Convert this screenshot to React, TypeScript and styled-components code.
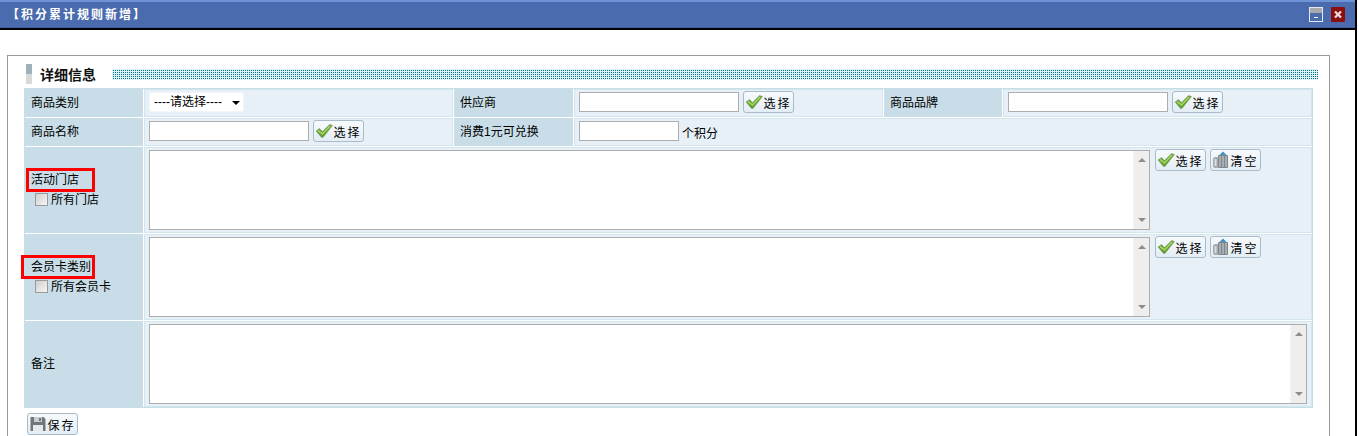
import React from "react";
import styled, { createGlobalStyle } from "styled-components";

const GlobalStyle = createGlobalStyle`
  html, body {
    margin: 0;
    padding: 0;
    height: 436px;
    overflow: hidden;
    background: #fff;
  }
  body {
    font-family: "Liberation Sans", "Noto Sans CJK SC", sans-serif;
    font-size: 12px;
    color: #000;
  }
`;

const Page = styled.div`
  width: 1355px;
  height: 436px;
  border-right: 2px solid #000;
  overflow: hidden;
`;

const TitleBar = styled.div`
  height: 28px;
  box-sizing: border-box;
  display: flex;
  align-items: center;
  justify-content: space-between;
  padding: 0 10px 0 7px;
  background: #4a6bad;
  border-top: 2px solid #6f93d6;
  border-bottom: 1px solid #43619c;
`;

const TitleRule = styled.div`
  height: 2px;
  background: #000;
`;

const TitleText = styled.div`
  color: #fff;
  font-weight: 700;
  font-size: 12px;
  letter-spacing: 2px;
  padding-bottom: 2px;
`;

const WindowTools = styled.div`
  display: flex;
  align-items: center;
  gap: 8px;
`;

const ToolIcon = styled.svg`
  display: block;
  width: 14px;
  height: 15px;
`;

const Panel = styled.div`
  margin: 25px 0 0 7px;
  width: 1323px;
  height: 400px;
  box-sizing: border-box;
  border: 1px solid #999;
  border-bottom: 0;
  padding: 8px 11px 0 16px;
`;

const SectionHead = styled.div`
  display: flex;
  align-items: center;
  height: 20px;
  padding-left: 2px;
  margin-bottom: 4px;
`;

const SectionMark = styled.div`
  width: 6px;
  height: 20px;
  background: linear-gradient(#9fb2ba 50%, #d9d9d9 50%);
`;

const SectionTitle = styled.div`
  margin-left: 8px;
  width: 72px;
  font-size: 14px;
  font-weight: 700;
  color: #111;
`;

const DotStrip = styled.div`
  flex: 1;
  height: 11px;
  background-color: #006f8f;
  background-image: linear-gradient(90deg, #dff3f6 1px, transparent 1px),
    linear-gradient(#dff3f6 1px, transparent 1px);
  background-size: 2px 2px;
`;

const FormGrid = styled.div`
  display: grid;
  grid-template-columns: 118px 309px 119px 309px 118px 309px;
  grid-template-rows: 28px 28px 86px 86px 86px;
  gap: 1px;
  width: 1287px;
  background: #fff;
  border: 1px solid #c6dee7;
`;

const LabelCell = styled.div`
  background: #c8dde7;
  padding: 0 0 3px 6px;
  display: flex;
  flex-direction: column;
  justify-content: center;
  align-items: flex-start;
`;

const ValueCell = styled.div<{ $span?: number }>`
  grid-column: span ${(p) => p.$span ?? 1};
  background: #e7f0f7;
  padding: 0 5px 2px;
  display: flex;
  align-items: center;
  gap: 4px;
  box-shadow: inset 0 0 0 1px #d3e6ee;
`;

const AreaCell = styled(ValueCell)`
  align-items: flex-start;
  padding-top: 2px;
  gap: 5px;
`;

const Marked = styled.span<{ $wide?: boolean }>`
  position: relative;
  line-height: 18px;
  &::after {
    content: "";
    position: absolute;
    box-sizing: border-box;
    top: -3px;
    bottom: -3px;
    left: ${(p) => (p.$wide ? "-10px" : "-5px")};
    right: ${(p) => (p.$wide ? "-4px" : "-16px")};
    border: 3px solid #f00;
  }
`;

const CheckRow = styled.label`
  display: flex;
  align-items: center;
  gap: 3px;
  margin: 3px 0 -2px 4px;
  line-height: 16px;
`;

const Check = styled.input`
  appearance: none;
  margin: -2px 0 0;
  width: 13px;
  height: 13px;
  box-sizing: border-box;
  border: 1px solid #9a9a9a;
  background: linear-gradient(135deg, #cfcfcf, #f6f6f6);
`;

const TextInput = styled.input<{ $short?: boolean }>`
  width: ${(p) => (p.$short ? "100px" : "160px")};
  height: 20px;
  box-sizing: border-box;
  margin: 0;
  padding: 0 2px;
  border: 1px solid #adadad;
  background: #fff;
`;

const SelectWrap = styled.div`
  position: relative;
  width: 95px;
  height: 20px;
  &::after {
    content: "";
    position: absolute;
    top: 9px;
    right: 4px;
    border-left: 4px solid transparent;
    border-right: 4px solid transparent;
    border-top: 4px solid #000;
    pointer-events: none;
  }
`;

const Select = styled.select`
  appearance: none;
  display: block;
  width: 100%;
  height: 100%;
  margin: 0;
  padding: 0 0 0 4px;
  border: 1px solid #f2f6f9;
  border-radius: 2px;
  background: #fff;
  font: inherit;
  color: #000;
`;

const Unit = styled.span`
  margin-left: -1px;
  padding-top: 3px;
`;

const Button = styled.button`
  display: inline-flex;
  align-items: center;
  justify-content: center;
  width: 51px;
  height: 22px;
  box-sizing: border-box;
  padding: 0;
  border: 1px solid #a8bbc8;
  border-radius: 3px;
  background: linear-gradient(#f7fafc, #e3edf5);
  font: inherit;
  color: #000;
  letter-spacing: 2px;
  white-space: nowrap;
`;

const BtnIcon = styled.svg`
  display: block;
  flex: none;
  width: 18px;
  height: 18px;
`;

const AreaBox = styled.div<{ $full?: boolean }>`
  flex: ${(p) => (p.$full ? 1 : "none")};
  width: ${(p) => (p.$full ? "auto" : "1001px")};
  height: 80px;
  margin-top: 1px;
  box-sizing: border-box;
  display: flex;
  background: #fff;
  border: 1px solid #adadad;
`;

const Area = styled.textarea`
  flex: 1;
  border: 0;
  padding: 2px;
  resize: none;
  outline: 0;
  background: #fff;
`;

const ScrollStrip = styled.div`
  width: 16px;
  display: flex;
  flex-direction: column;
  justify-content: space-between;
  align-items: center;
  padding: 7px 0;
  box-sizing: border-box;
  background: #eeeeee;
  border-left: 1px solid #f4f4f4;
`;

const Arrow = styled.div<{ $down?: boolean }>`
  width: 0;
  height: 0;
  border-left: 4px solid transparent;
  border-right: 4px solid transparent;
  ${(p) =>
    p.$down
      ? "border-top: 4px solid #8d8d8d;"
      : "border-bottom: 4px solid #8d8d8d;"}
`;

const ButtonGroup = styled.div`
  display: flex;
  gap: 4px;
`;

const FooterRow = styled.div`
  padding: 5px 0 0 3px;
`;

const CheckIcon = () => (
  <BtnIcon viewBox="0 0 18 18">
    <path d="M1 9 L4.5 6.5 L7.5 9.5 L14.5 2.5 L17.5 3.5 L8 15.5 L6.5 15.5 Z" fill="#5f9e2f" stroke="#8aa07a" strokeWidth="0.6" />
    <path d="M3 8.5 L7.5 12 L15 4" fill="none" stroke="#a6d765" strokeWidth="1.6" />
  </BtnIcon>
);

const TrashIcon = () => (
  <BtnIcon viewBox="0 0 18 18">
    <rect x="1" y="6" width="6" height="11" rx="2.5" fill="#a3a8ab" />
    <rect x="2.5" y="8" width="2" height="7" fill="#d9dcde" />
    <rect x="6" y="4" width="10" height="13" rx="1" fill="#7f878c" />
    <path d="M8 5v11M11 5v11M14 5v11" stroke="#cfd5d8" strokeWidth="1" />
    <path d="M7.5 4 L11 0.5 L14.5 4 Z" fill="#3f8fc9" />
  </BtnIcon>
);

const SaveIcon = () => (
  <BtnIcon viewBox="0 0 18 18">
    <path d="M1.5 2h13l2 2v12h-15z" fill="#70777c" />
    <rect x="5" y="2" width="8" height="5" fill="#c9ced2" />
    <rect x="10" y="3" width="2" height="3" fill="#70777c" />
    <rect x="4" y="10" width="10" height="6" fill="#e6e9eb" />
  </BtnIcon>
);

const PickButton = () => (
  <Button type="button">
    <CheckIcon />
    选择
  </Button>
);

const ClearButton = () => (
  <Button type="button">
    <TrashIcon />
    清空
  </Button>
);

const TextBox = ({ full }: { full?: boolean }) => (
  <AreaBox $full={full}>
    <Area />
    <ScrollStrip>
      <Arrow />
      <Arrow $down />
    </ScrollStrip>
  </AreaBox>
);

export default function App() {
  return (
    <>
      <GlobalStyle />
      <Page>
        <TitleBar>
          <TitleText>【积分累计规则新增】</TitleText>
          <WindowTools>
            <ToolIcon viewBox="0 0 14 15">
              <rect x="0.5" y="0.5" width="13" height="14" fill="#4a6bad" stroke="#e4e8f2" />
              <rect x="1" y="1" width="12" height="5" fill="#a9a9a9" />
              <rect x="5" y="10" width="4" height="1" fill="#fff" />
            </ToolIcon>
            <ToolIcon viewBox="0 0 14 15">
              <rect x="0" y="0" width="14" height="15" rx="1" fill="#8a1010" />
              <path d="M4 4.5 L10 10.5 M10 4.5 L4 10.5" stroke="#f3dcdc" strokeWidth="2.2" />
            </ToolIcon>
          </WindowTools>
        </TitleBar>
        <TitleRule />
        <Panel>
          <SectionHead>
            <SectionMark />
            <SectionTitle>详细信息</SectionTitle>
            <DotStrip />
          </SectionHead>
          <FormGrid>
            <LabelCell>商品类别</LabelCell>
            <ValueCell>
              <SelectWrap>
                <Select defaultValue="">
                  <option value="">----请选择----</option>
                </Select>
              </SelectWrap>
            </ValueCell>
            <LabelCell>供应商</LabelCell>
            <ValueCell>
              <TextInput />
              <PickButton />
            </ValueCell>
            <LabelCell>商品品牌</LabelCell>
            <ValueCell>
              <TextInput />
              <PickButton />
            </ValueCell>

            <LabelCell>商品名称</LabelCell>
            <ValueCell>
              <TextInput />
              <PickButton />
            </ValueCell>
            <LabelCell>消费1元可兑换</LabelCell>
            <ValueCell $span={3}>
              <TextInput $short />
              <Unit>个积分</Unit>
            </ValueCell>

            <LabelCell>
              <Marked>活动门店</Marked>
              <CheckRow>
                <Check type="checkbox" />
                所有门店
              </CheckRow>
            </LabelCell>
            <AreaCell $span={5}>
              <TextBox />
              <ButtonGroup>
                <PickButton />
                <ClearButton />
              </ButtonGroup>
            </AreaCell>

            <LabelCell>
              <Marked $wide>会员卡类别</Marked>
              <CheckRow>
                <Check type="checkbox" />
                所有会员卡
              </CheckRow>
            </LabelCell>
            <AreaCell $span={5}>
              <TextBox />
              <ButtonGroup>
                <PickButton />
                <ClearButton />
              </ButtonGroup>
            </AreaCell>

            <LabelCell>备注</LabelCell>
            <AreaCell $span={5}>
              <TextBox full />
            </AreaCell>
          </FormGrid>
          <FooterRow>
            <Button type="button">
              <SaveIcon />
              保存
            </Button>
          </FooterRow>
        </Panel>
      </Page>
    </>
  );
}
